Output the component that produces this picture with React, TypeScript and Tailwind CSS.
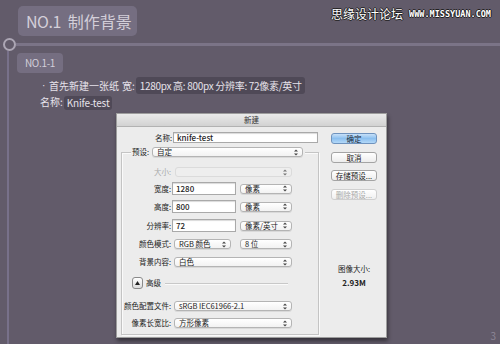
import React from "react";

const cjk = { fontFamily: '"Noto Sans CJK SC", "Noto Sans", sans-serif' };

function Chevron() {
  return (
    <svg width="4" height="7" viewBox="0 0 4 7" className="shrink-0">
      <path d="M0 2.6 L2 0.4 L4 2.6 Z" fill="#444" />
      <path d="M0 4.4 L2 6.6 L4 4.4 Z" fill="#444" />
    </svg>
  );
}

function Select({ w, text, disabled }: { w: string; text?: string; disabled?: boolean }) {
  return (
    <div
      className={`${w} h-[10px] flex items-center justify-between pl-[4px] pr-[4px] rounded-[3px] border text-[7.5px] leading-none whitespace-nowrap ${
        disabled
          ? "border-[#d4d4d4] bg-[#efefef] text-[#999] opacity-70"
          : "border-[#b4b4b4] bg-gradient-to-b from-white to-[#f2f2f2] text-[#222] shadow-[0_1px_0_rgba(0,0,0,0.08)]"
      }`}
    >
      <span>{text}</span>
      <Chevron />
    </div>
  );
}

function Input({ w, text, h = "h-[13px]" }: { w: string; text: string; h?: string }) {
  return (
    <div
      className={`${w} ${h} flex items-center pl-[3px] bg-white border border-[#a9a9a9] shadow-[inset_0_1px_1px_rgba(0,0,0,0.15)] text-[8px] leading-none text-[#222] font-medium`}
    >
      {text}
    </div>
  );
}

function Label({ text, light }: { text: string; light?: boolean }) {
  return (
    <div
      className={`w-[50px] shrink-0 text-right pr-[1px] text-[7.5px] leading-none whitespace-nowrap ${
        light ? "text-[#aaa]" : "text-[#222]"
      }`}
    >
      {text}
    </div>
  );
}

function Btn({ text, primary, disabled, mt }: { text: string; primary?: boolean; disabled?: boolean; mt: string }) {
  return (
    <div
      className={`${mt} w-[46px] h-[11px] mx-auto flex items-center justify-center rounded-[3px] border text-[7.5px] leading-none whitespace-nowrap ${
        primary
          ? "border-[#6f93be] bg-gradient-to-b from-[#c7e0f8] via-[#8cc0ef] to-[#b3d8f8] text-[#1a2a3a]"
          : disabled
          ? "border-[#cfcfcf] bg-gradient-to-b from-white to-[#f0f0f0] text-[#aaa]"
          : "border-[#a4a4a4] bg-gradient-to-b from-white to-[#ededed] text-[#222]"
      }`}
    >
      {text}
    </div>
  );
}

export default function App() {
  return (
    <div className="w-[500px] h-[344px] bg-[#625b6a] overflow-hidden relative" style={cjk}>
      {/* watermark */}
      <div
        className="absolute top-[8px] right-[9px] flex items-center gap-[6px] text-white"
        style={{ textShadow: "1px 0 0 #222, -1px 0 0 #222, 0 1px 0 #222, 0 -1px 0 #222" }}
      >
        <span className="text-[12px] leading-none">思缘设计论坛</span>
        <span className="text-[8.5px] leading-none font-bold" style={{ fontFamily: '"DejaVu Sans Mono", monospace' }}>
          WWW.MISSYUAN.COM
        </span>
      </div>

      {/* title */}
      <div className="pt-[6px] pl-[18px] h-[38px]">
        <div className="w-[119px] h-[30px] rounded-[5px] bg-[#756e81] flex items-center pl-[8px] text-[#d3cfd9] text-[16px] leading-none whitespace-nowrap">
          <span className="tracking-[-0.5px]">NO.1</span>
          <span className="ml-[7px]">制作背景</span>
        </div>
      </div>

      {/* timeline */}
      <div className="flex items-center h-[13px]">
        <div className="ml-[3px] w-[13px] h-[13px] rounded-full border-2 border-[#aca6b4] bg-[#625b6a] shrink-0" />
        <div className="flex-1 h-[3px] bg-[#7b7487]" />
      </div>

      <div className="ml-[7px] border-l-2 border-[#78718a] h-[300px] flex flex-col">
        <div className="ml-[8px] mt-[2px] w-[46px] h-[20px] rounded-[4px] bg-[#756e81] flex items-center justify-center text-[10px] leading-none text-[#d3cfd9] tracking-[-0.3px]">
          NO.1-1
        </div>

        <div className="mt-[4px] ml-[33px] h-[17px] flex items-center text-[10px] leading-none text-[#e6e2ea] whitespace-nowrap">
          <span className="w-[7px]" style={{ fontFamily: '"Liberation Sans", sans-serif' }}>·</span>
          <span>首先新建一张纸</span>
          <span className="ml-[3px]">宽:</span>
          <div className="h-[17px] ml-[1px] rounded-[3px] bg-[#4f4957] flex items-center pl-[4px] pr-[3px] tracking-[-0.3px]">
            1280px 高: 800px 分辨率: 72像素/英寸
          </div>
        </div>

        <div className="ml-[31px] h-[16px] flex items-center text-[10px] leading-none text-[#e6e2ea] whitespace-nowrap">
          <span>名称:</span>
          <div className="h-[14px] mt-[2px] ml-[1px] rounded-[3px] bg-[#4f4957] flex items-center px-[3px] tracking-[-0.2px]">
            Knife-test
          </div>
        </div>

        {/* dialog */}
        <div className="mt-[3px] ml-[107px] w-[271px] h-[225px] bg-[#ececec] border border-[#9d9d9d] shadow-[1px_3px_4px_rgba(0,0,0,0.45)] flex flex-col">
          <div className="h-[13px] bg-gradient-to-b from-[#eaeaea] to-[#d2d2d2] border-b border-[#b2b2b2] flex items-center justify-center text-[7.5px] leading-none text-[#333]">
            新建
          </div>
          <div className="flex flex-1">
            {/* left */}
            <div className="w-[205px] flex flex-col">
              <div className="mt-[5px] h-[11px] flex items-center">
                <div className="w-[56px] text-right pr-[1px] text-[7.5px] leading-none text-[#222]">名称:</div>
                <Input w="w-[145px]" h="h-[11px]" text="knife-test" />
              </div>

              <div className="mt-[9px] ml-[4px] w-[198px] border border-[#c4c4c4] shadow-[inset_1px_1px_0_#fafafa,1px_1px_0_#fafafa] pb-[6px] flex flex-col">
                <div className="-mt-[6px] ml-[9px] h-[10px] flex items-center bg-[#ececec] pl-[1px] w-fit">
                  <span className="text-[7.5px] leading-none text-[#222] mr-[3px] whitespace-nowrap">预设:</span>
                  <Select w="w-[151px]" text="自定" />
                  <div className="w-[2px]" />
                </div>

                <div className="mt-[10px] h-[10px] flex items-center">
                  <Label text="大小:" light />
                  <div className="ml-[3px]">
                    <Select w="w-[117px]" disabled />
                  </div>
                </div>

                <div className="mt-[5px] h-[13px] flex items-center">
                  <Label text="宽度:" />
                  <Input w="w-[64px]" text="1280" />
                  <div className="ml-[4px]">
                    <Select w="w-[52px]" text="像素" />
                  </div>
                </div>

                <div className="mt-[5px] h-[13px] flex items-center">
                  <Label text="高度:" />
                  <Input w="w-[64px]" text="800" />
                  <div className="ml-[4px]">
                    <Select w="w-[52px]" text="像素" />
                  </div>
                </div>

                <div className="mt-[6px] h-[13px] flex items-center">
                  <Label text="分辨率:" />
                  <Input w="w-[64px]" text="72" />
                  <div className="ml-[4px]">
                    <Select w="w-[52px]" text="像素/英寸" />
                  </div>
                </div>

                <div className="mt-[7px] h-[10px] flex items-center">
                  <Label text="颜色模式:" />
                  <div className="ml-[2px]">
                    <Select w="w-[57px]" text="RGB 颜色" />
                  </div>
                  <div className="ml-[9px]">
                    <Select w="w-[52px]" text="8 位" />
                  </div>
                </div>

                <div className="mt-[8px] h-[10px] flex items-center">
                  <Label text="背景内容:" />
                  <div className="ml-[2px]">
                    <Select w="w-[118px]" text="白色" />
                  </div>
                </div>

                <div className="mt-[10px] h-[12px] flex items-center">
                  <div className="ml-[10px] w-[11px] h-[12px] rounded-[3px] border border-[#8a8a8a] bg-gradient-to-b from-white to-[#dcdcdc] flex items-center justify-center">
                    <svg width="5" height="4" viewBox="0 0 5 4">
                      <path d="M0 4 L2.5 0 L5 4 Z" fill="#222" />
                    </svg>
                  </div>
                  <span className="ml-[3px] text-[7.5px] leading-none text-[#222]">高级</span>
                  <div className="ml-[4px] mr-[30px] flex-1 h-px bg-[#c8c8c8] shadow-[0_1px_0_#fafafa]" />
                </div>

                <div className="mt-[12px] h-[10px] flex items-center">
                  <Label text="颜色配置文件:" />
                  <div className="ml-[2px]">
                    <Select w="w-[118px]" text="sRGB IEC61966-2.1" />
                  </div>
                </div>

                <div className="mt-[7px] h-[10px] flex items-center">
                  <Label text="像素长宽比:" />
                  <div className="ml-[2px]">
                    <Select w="w-[118px]" text="方形像素" />
                  </div>
                </div>
              </div>
            </div>

            {/* right */}
            <div className="flex-1 flex flex-col">
              <Btn mt="mt-[6px]" text="确定" primary />
              <Btn mt="mt-[8px]" text="取消" />
              <Btn mt="mt-[7px]" text="存储预设..." />
              <Btn mt="mt-[8px]" text="删除预设..." disabled />
              <div className="mt-[64px] text-center text-[7.5px] leading-[10px] text-[#222]">图像大小:</div>
              <div className="mt-[4px] text-center text-[8px] leading-[10px] font-bold text-[#222]">2.93M</div>
            </div>
          </div>
        </div>
      </div>

      <div className="absolute bottom-[3px] right-[4px] text-[10px] leading-none text-[#8c8696]">3</div>
    </div>
  );
}
